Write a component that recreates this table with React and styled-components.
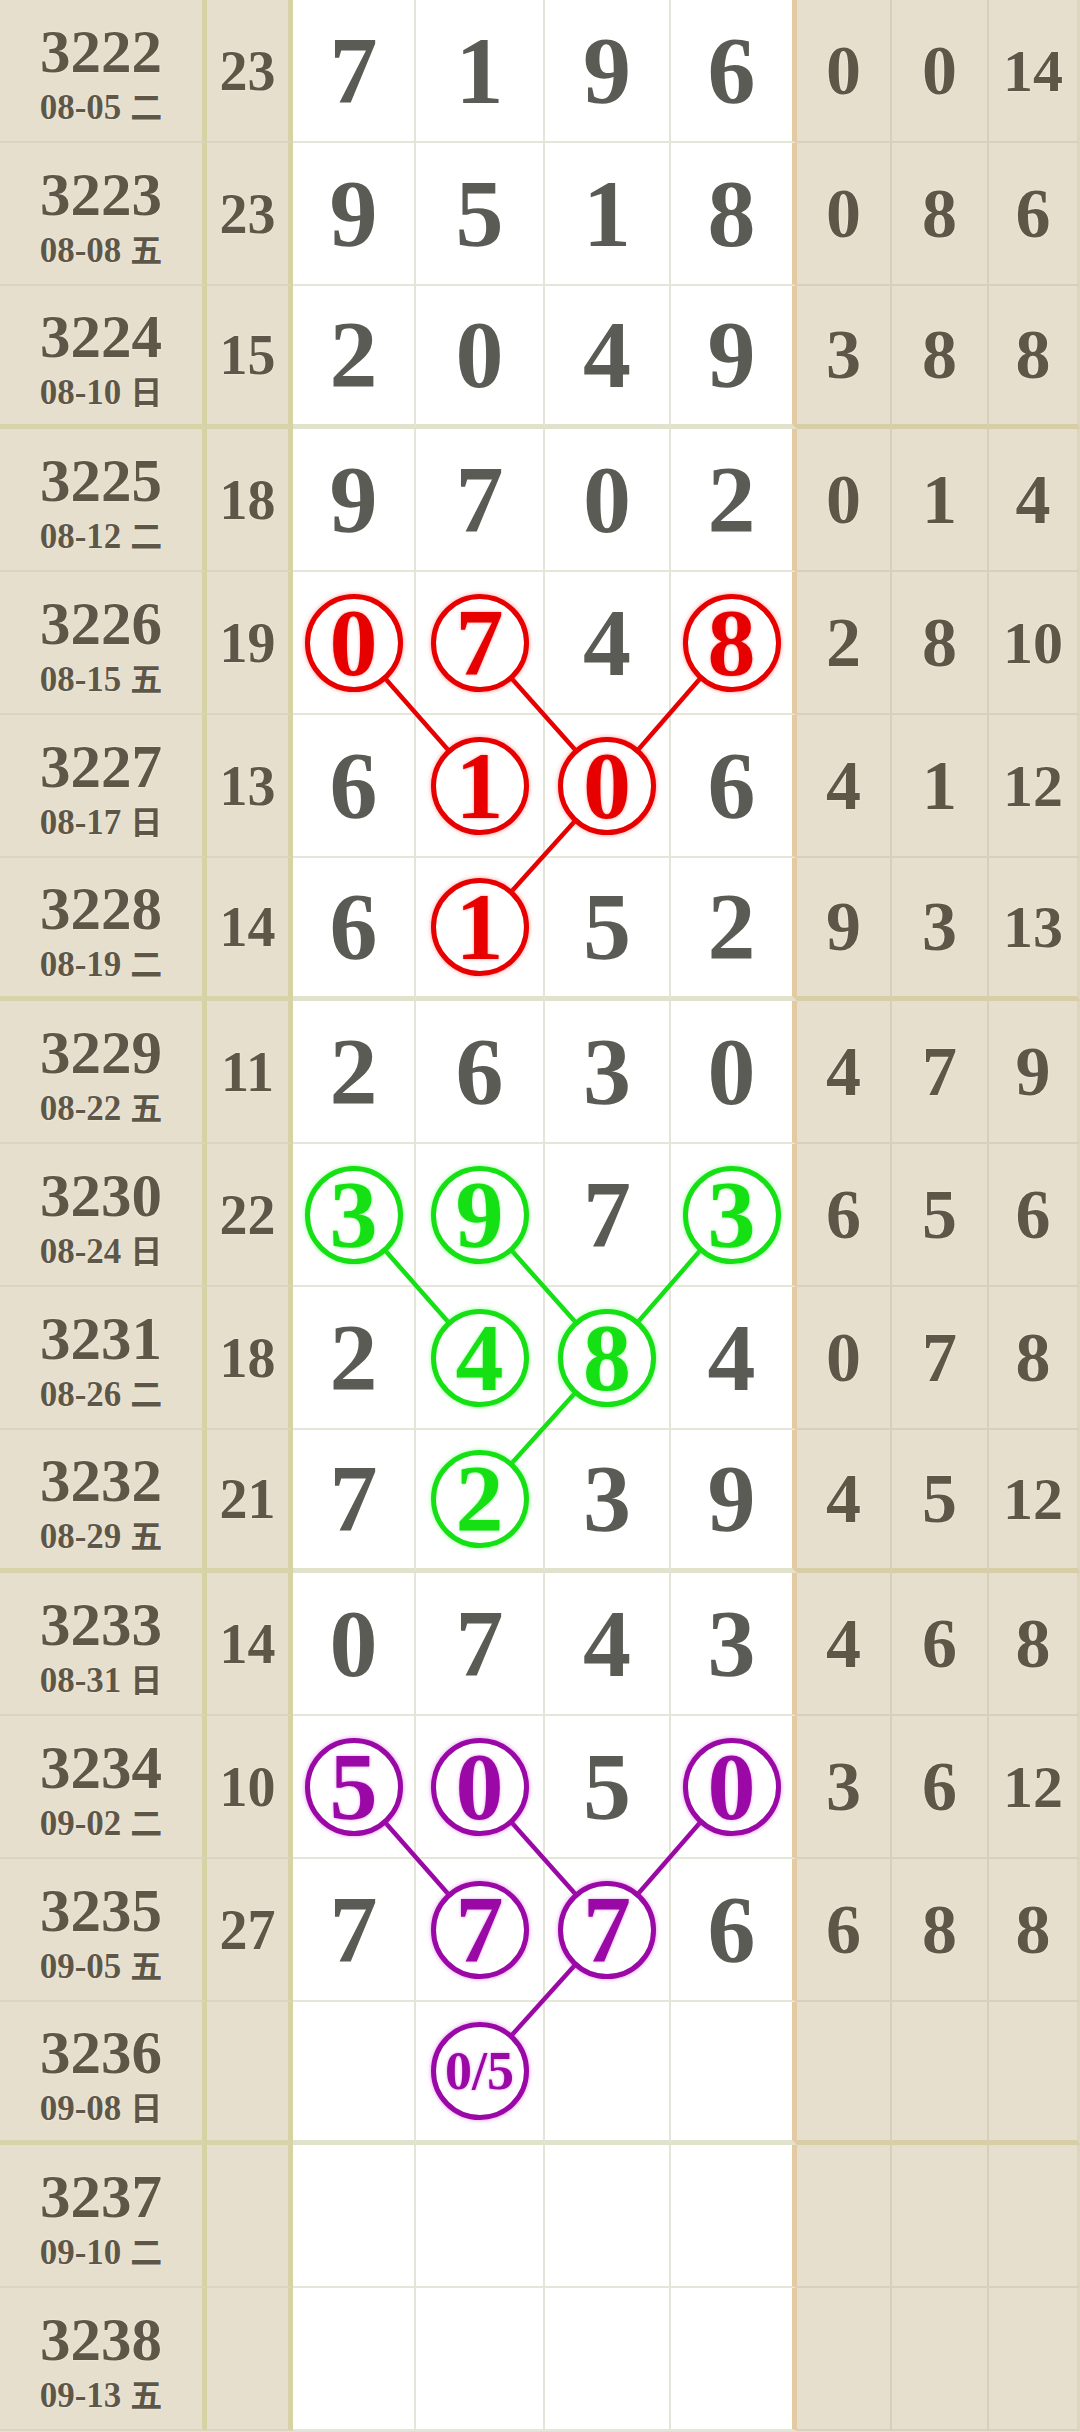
import React from 'react';
import styled, { createGlobalStyle } from 'styled-components';

const ROW_H = 143;
const DIGIT_CENTERS = [353.5, 479.5, 607, 731.5];
const GROUP_ENDS = [2, 6, 10, 14];

const TONES = {
  red: { ink: '#e60000', glow: 'rgba(255, 40, 40, 0.5)' },
  green: { ink: '#14e014', glow: 'rgba(40, 255, 40, 0.5)' },
  purple: { ink: '#9a08a6', glow: 'rgba(200, 40, 220, 0.5)' },
};

const draws = [
  ['3222', '08-05', '二', '23', [7, 1, 9, 6], [0, 0, 14]],
  ['3223', '08-08', '五', '23', [9, 5, 1, 8], [0, 8, 6]],
  ['3224', '08-10', '日', '15', [2, 0, 4, 9], [3, 8, 8]],
  ['3225', '08-12', '二', '18', [9, 7, 0, 2], [0, 1, 4]],
  ['3226', '08-15', '五', '19', [0, 7, 4, 8], [2, 8, 10]],
  ['3227', '08-17', '日', '13', [6, 1, 0, 6], [4, 1, 12]],
  ['3228', '08-19', '二', '14', [6, 1, 5, 2], [9, 3, 13]],
  ['3229', '08-22', '五', '11', [2, 6, 3, 0], [4, 7, 9]],
  ['3230', '08-24', '日', '22', [3, 9, 7, 3], [6, 5, 6]],
  ['3231', '08-26', '二', '18', [2, 4, 8, 4], [0, 7, 8]],
  ['3232', '08-29', '五', '21', [7, 2, 3, 9], [4, 5, 12]],
  ['3233', '08-31', '日', '14', [0, 7, 4, 3], [4, 6, 8]],
  ['3234', '09-02', '二', '10', [5, 0, 5, 0], [3, 6, 12]],
  ['3235', '09-05', '五', '27', [7, 7, 7, 6], [6, 8, 8]],
  ['3236', '09-08', '日', '', [null, '0/5', null, null], [null, null, null]],
  ['3237', '09-10', '二', '', [null, null, null, null], [null, null, null]],
  ['3238', '09-13', '五', '', [null, null, null, null], [null, null, null]],
];

// each trend: circled cells in three rows and the links between them
const groups = [
  { top: 4, tone: 'red' },
  { top: 8, tone: 'green' },
  { top: 12, tone: 'purple' },
];

const marks = {};
const links = [];
groups.forEach(({ top, tone }) => {
  [[top, 0], [top, 1], [top, 3], [top + 1, 1], [top + 1, 2], [top + 2, 1]].forEach(
    ([r, c]) => {
      marks[`${r}-${c}`] = tone;
    }
  );
  links.push(
    { from: [top, 0], to: [top + 1, 1], tone },
    { from: [top, 1], to: [top + 1, 2], tone },
    { from: [top, 3], to: [top + 1, 2], tone },
    { from: [top + 1, 2], to: [top + 2, 1], tone }
  );
});

const isEnd = r => GROUP_ENDS.includes(r);
const rowCenter = r => r * ROW_H + (ROW_H - (isEnd(r) ? 5 : 2)) / 2;

const GlobalStyle = createGlobalStyle`
  html, body {
    margin: 0;
    padding: 0;
    background: #e6dfcd;
  }
  body {
    font-family: "Liberation Serif", "Noto Sans CJK SC", serif;
  }
`;

const Sheet = styled.div`
  position: relative;
  width: 1080px;
`;

const Row = styled.div`
  display: grid;
  grid-template-columns: 207px 86px 123px 129px 126px 126px 95px 97px 91px;
  height: ${ROW_H}px;
`;

const Cell = styled.div`
  box-sizing: border-box;
  display: flex;
  align-items: center;
  justify-content: center;
  font-weight: 700;
  line-height: 1;
`;

const IssueCell = styled(Cell)`
  flex-direction: column;
  gap: 7px;
  padding-top: 5px;
  background: #e6dfcd;
  color: #5e5748;
  border-right: 5px solid #d6d2a4;
  border-bottom: ${({ $end }) => ($end ? '5px solid #d9d3aa' : '2px solid #dbd4c0')};
  text-shadow: 0 0 2px rgba(255, 255, 255, 0.7);
`;

const IssueNo = styled.div`
  font-size: 61px;
  line-height: 1;
`;

const IssueDate = styled.div`
  font-size: 35px;
  line-height: 1;
  white-space: nowrap;
`;

const Weekday = styled.span`
  font-family: "Noto Sans CJK SC", sans-serif;
  font-size: 32px;
  margin-left: 9px;
`;

const SumCell = styled(Cell)`
  background: #e6dfcd;
  color: #5e5748;
  font-size: 56px;
  border-right: 5px solid #d6d2a4;
  border-bottom: ${({ $end }) => ($end ? '5px solid #d9d3aa' : '2px solid #dbd4c0')};
  text-shadow: 0 0 2px rgba(255, 255, 255, 0.7);
`;

const DigitCell = styled(Cell)`
  background: #ffffff;
  color: #5b5b55;
  font-size: 96px;
  border-right: ${({ $last }) => ($last ? '5px solid #e3caa3' : '2px solid #e4e4d8')};
  border-bottom: ${({ $end }) => ($end ? '5px solid #e1e2cb' : '2px solid #e6e6d8')};
`;

const StatCell = styled(Cell)`
  background: #e6dfcd;
  color: #5e5748;
  font-size: ${({ $wide }) => ($wide ? '60px' : '70px')};
  border-right: ${({ $last }) => ($last ? '3px solid #ddd6be' : '2px solid #d8cfba')};
  border-bottom: ${({ $end }) => ($end ? '5px solid #d8cea6' : '2px solid #d9d0bb')};
  text-shadow: 0 0 2px rgba(255, 255, 255, 0.7);
`;

const Mark = styled.span`
  position: relative;
  z-index: 2;
  box-sizing: border-box;
  display: flex;
  align-items: center;
  justify-content: center;
  width: 98px;
  height: 98px;
  border-radius: 50%;
  border: 5px solid ${({ $tone }) => TONES[$tone].ink};
  background: #ffffff;
  color: ${({ $tone }) => TONES[$tone].ink};
  font-size: ${({ $small }) => ($small ? '54px' : '96px')};
  box-shadow: 0 0 4px ${({ $tone }) => TONES[$tone].glow};
  text-shadow: 0 0 3px ${({ $tone }) => TONES[$tone].glow};
`;

const Links = styled.svg`
  position: absolute;
  top: 0;
  left: 0;
  z-index: 1;
  pointer-events: none;
`;

const App = () => (
  <>
    <GlobalStyle />
    <Sheet>
      {draws.map(([issue, date, day, sum, digits, stats], r) => (
        <Row key={issue}>
          <IssueCell $end={isEnd(r)}>
            <IssueNo>{issue}</IssueNo>
            <IssueDate>
              {date}
              <Weekday>{day}</Weekday>
            </IssueDate>
          </IssueCell>
          <SumCell $end={isEnd(r)}>{sum}</SumCell>
          {digits.map((d, c) => {
            const tone = marks[`${r}-${c}`];
            return (
              <DigitCell key={c} $end={isEnd(r)} $last={c === 3}>
                {tone ? (
                  <Mark $tone={tone} $small={String(d).length > 1}>
                    {d}
                  </Mark>
                ) : (
                  d
                )}
              </DigitCell>
            );
          })}
          {stats.map((s, c) => (
            <StatCell
              key={c}
              $end={isEnd(r)}
              $last={c === 2}
              $wide={s !== null && s >= 10}
            >
              {s}
            </StatCell>
          ))}
        </Row>
      ))}
      <Links width="1080" height={draws.length * ROW_H}>
        {links.map(({ from, to, tone }, i) => (
          <line
            key={i}
            x1={DIGIT_CENTERS[from[1]]}
            y1={rowCenter(from[0])}
            x2={DIGIT_CENTERS[to[1]]}
            y2={rowCenter(to[0])}
            stroke={TONES[tone].ink}
            strokeWidth="4.5"
          />
        ))}
      </Links>
    </Sheet>
  </>
);

export default App;
